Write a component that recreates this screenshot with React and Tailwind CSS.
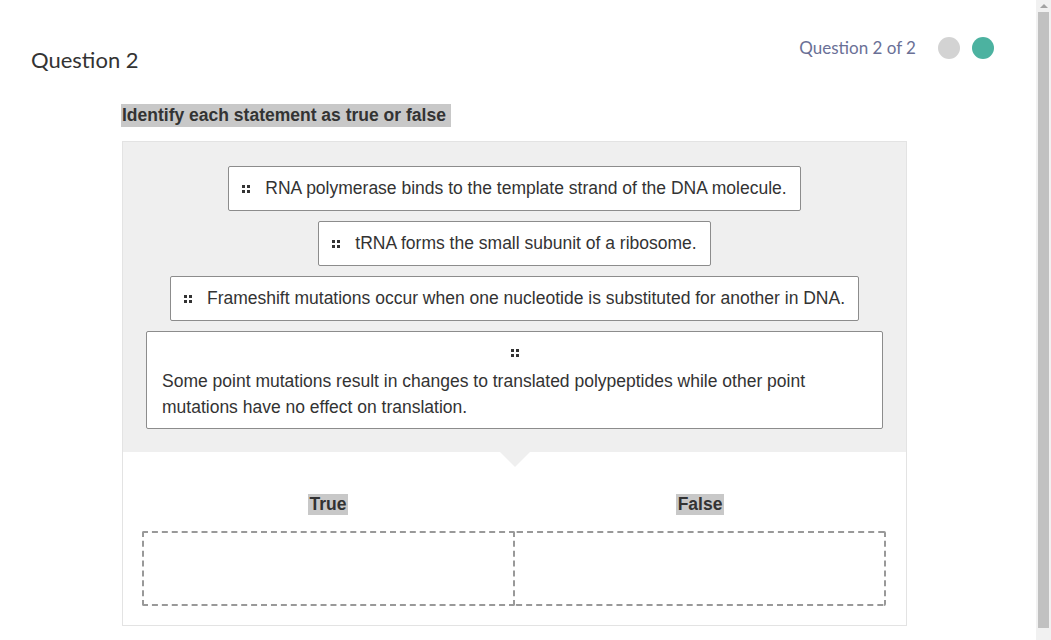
import React from 'react';

const statements = [
  'RNA polymerase binds to the template strand of the DNA molecule.',
  'tRNA forms the small subunit of a ribosome.',
  'Frameshift mutations occur when one nucleotide is substituted for another in DNA.',
];

function Handle() {
  return (
    <span className="inline-grid grid-cols-2 gap-[2px] w-[8px] shrink-0">
      <span className="w-[3px] h-[3px] bg-[#333]"></span>
      <span className="w-[3px] h-[3px] bg-[#333]"></span>
      <span className="w-[3px] h-[3px] bg-[#333]"></span>
      <span className="w-[3px] h-[3px] bg-[#333]"></span>
    </span>
  );
}

function Card({ text }) {
  return (
    <div className="flex items-center gap-[15px] bg-white border border-[#8c8c8c] rounded-[2px] px-[13px] py-[11px] text-[17.5px] leading-[21px] text-[#333]">
      <Handle />
      <span>{text}</span>
    </div>
  );
}

export default function App() {
  return (
    <div className="flex h-[640px] overflow-hidden bg-white" style={{ fontFamily: '"Liberation Sans", Arial, sans-serif' }}>
      <div className="flex-1">
        {/* header */}
        <div className="flex justify-between items-start">
          <h1 className="pl-[31px] pt-[46px] text-[22px] leading-[28px] text-[#333]" style={{ fontFamily: 'Lato, sans-serif' }}>
            Question 2
          </h1>
          <div className="flex items-center pt-[37px] pr-[42px] h-[59px]">
            <span className="text-[17px] leading-[22px] text-[#6a7096] mr-[22px]" style={{ fontFamily: 'Lato, sans-serif' }}>
              Question 2 of 2
            </span>
            <span className="w-[22px] h-[22px] rounded-full bg-[#d3d3d3] mr-[12px]"></span>
            <span className="w-[22px] h-[22px] rounded-full bg-[#4cb2a0]"></span>
          </div>
        </div>

        <div className="pl-[121px] mt-[30px]">
          <span className="inline-block bg-[#c8c8c8] pl-[1px] pr-[5px] text-[17.5px] leading-[23px] font-bold text-[#333]">
            Identify each statement as true or false
          </span>

          <div className="ml-[1px] mt-[13px] w-[785px] border border-[#e3e3e3]">
            {/* answer pool */}
            <div className="relative bg-[#efefef] px-[23px] pt-[24px] pb-[23px] flex flex-col items-center gap-[10px]">
              {statements.map((s) => (
                <Card key={s} text={s} />
              ))}
              <div className="w-full bg-white border border-[#8c8c8c] rounded-[2px] pl-[15px] pr-[14px] pt-[13px] pb-[8px] text-[17.5px] text-[#333]">
                <div className="flex justify-center h-[16px] items-center">
                  <Handle />
                </div>
                <p className="leading-[26px] mt-[7px]">
                  Some point mutations result in changes to translated polypeptides while other point mutations have no effect on translation.
                </p>
              </div>
              <span className="absolute left-1/2 -translate-x-1/2 top-full w-0 h-0 border-l-[15px] border-r-[15px] border-t-[15px] border-l-transparent border-r-transparent border-t-[#efefef]"></span>
            </div>

            {/* drop zones */}
            <div className="bg-white pl-[19px] pr-[20px] pt-[42px] pb-[19px]">
              <div className="grid grid-cols-2">
                <div className="flex justify-center">
                  <span className="bg-[#c8c8c8] px-[2px] font-bold text-[17.5px] leading-[21px] text-[#333]">True</span>
                </div>
                <div className="flex justify-center">
                  <span className="bg-[#c8c8c8] px-[2px] font-bold text-[17.5px] leading-[21px] text-[#333]">False</span>
                </div>
              </div>
              <div className="grid grid-cols-[373px_1fr] mt-[16px]">
                <div className="h-[75px] border-2 border-dashed border-[#999] rounded-[2px]"></div>
                <div className="h-[75px] border-2 border-l-0 border-dashed border-[#999] rounded-[2px]"></div>
              </div>
            </div>
          </div>
        </div>
      </div>

      {/* scrollbar */}
      <div className="w-[15px] bg-[#f1f1f1] flex flex-col items-center">
        <div className="h-[12px] flex items-center justify-center">
          <span className="w-0 h-0 border-l-[4px] border-r-[4px] border-b-[4px] border-l-transparent border-r-transparent border-b-[#a3a3a3]"></span>
        </div>
        <div className="w-[11px] h-[616px] bg-[#c1c1c1]"></div>
      </div>
    </div>
  );
}
